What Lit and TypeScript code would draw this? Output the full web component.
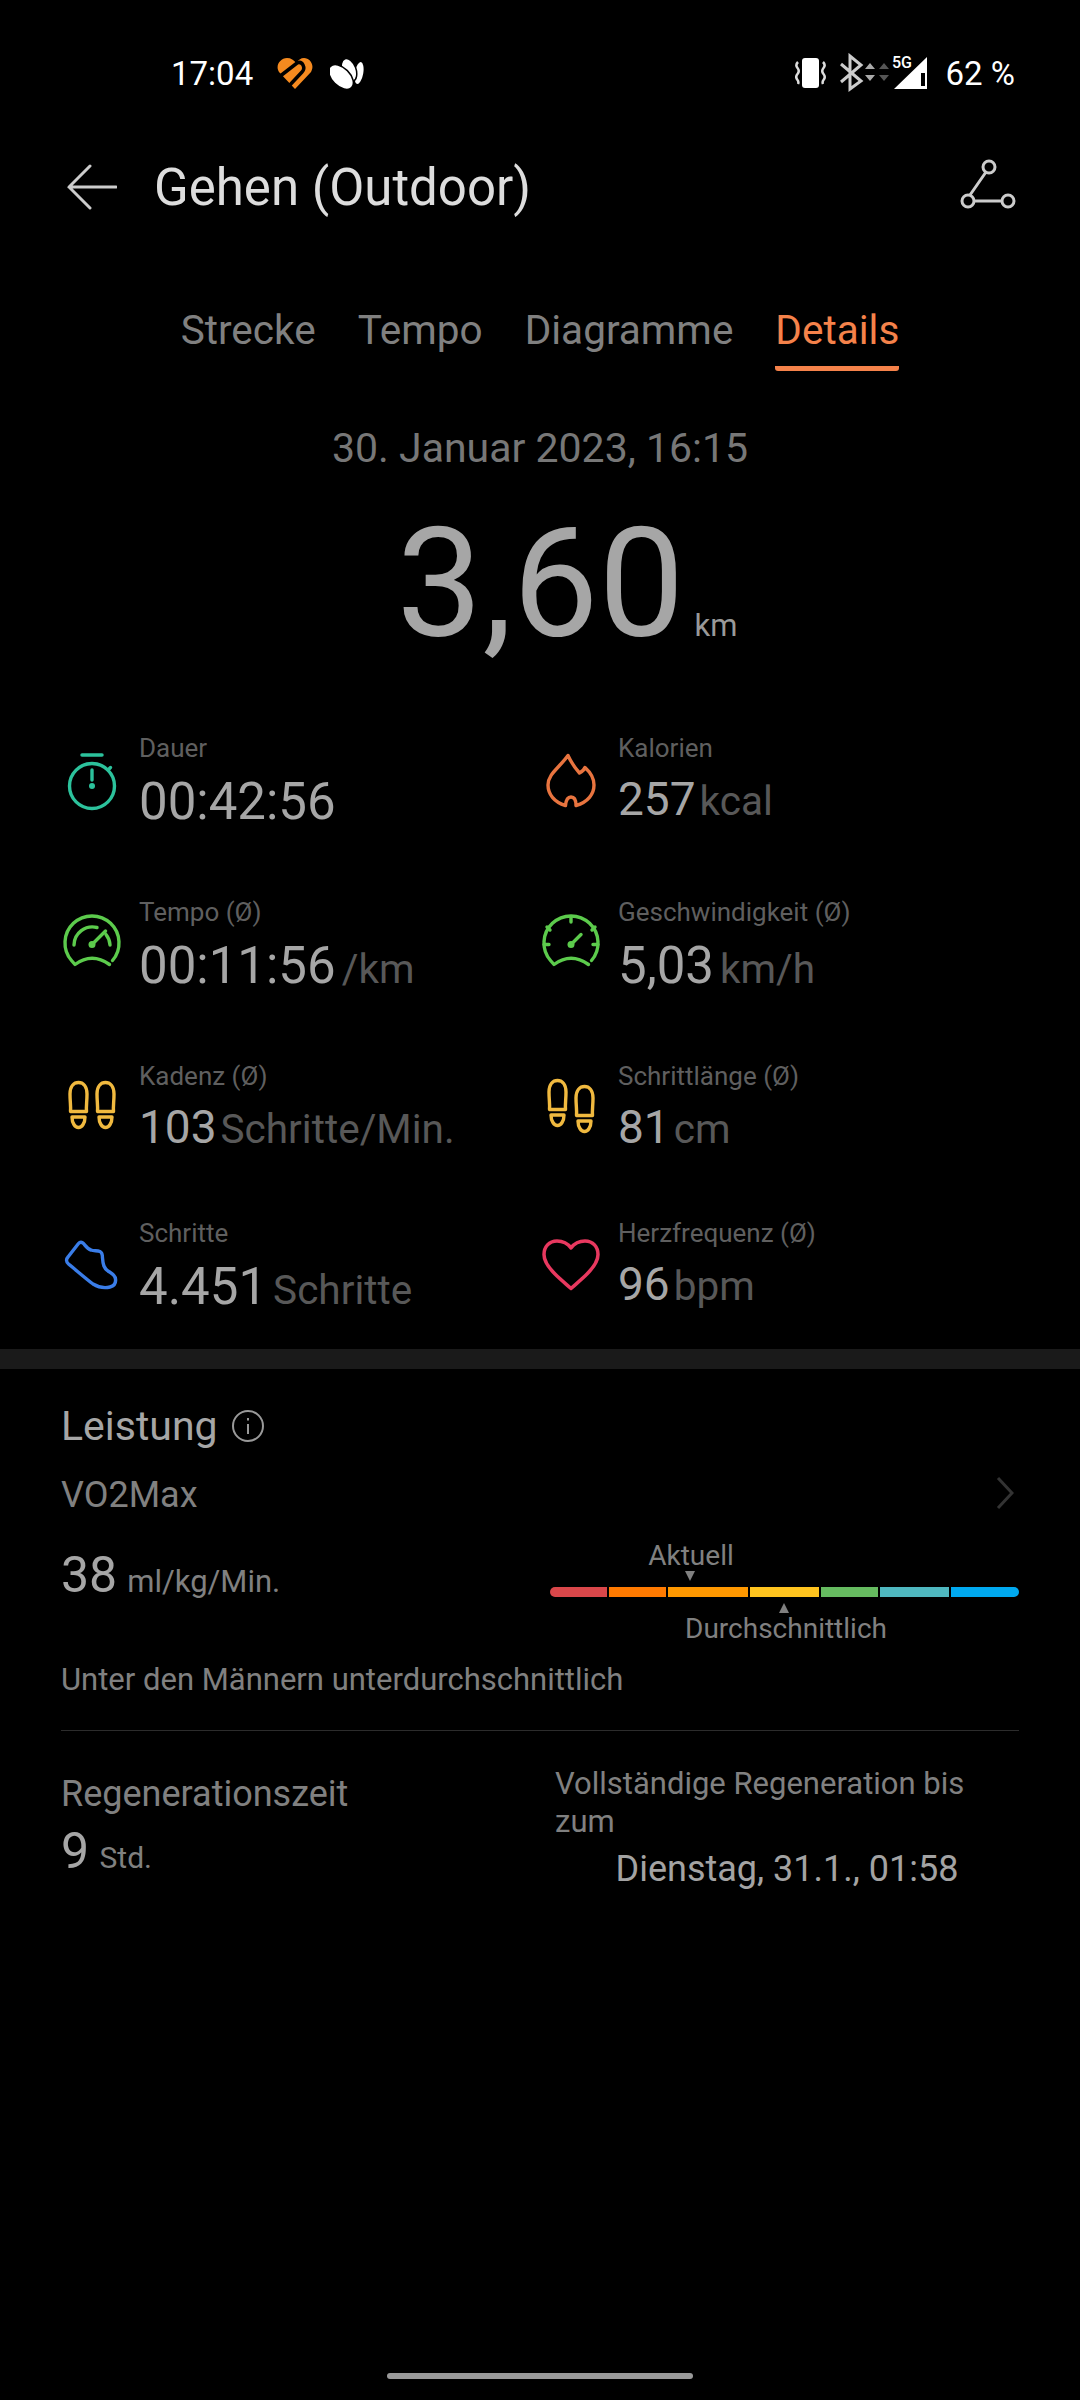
import { LitElement, css, html, svg } from "lit";
import { customElement } from "lit/decorators.js";

const gaugeOutline = svg`<path d="M53.5 56.5Q36 44 19 56.5L15.5 52.5A27 27 0 1 1 56.5 52.5"/>`;

const foot = (x: number, y: number) => svg`<g transform="translate(${x} ${y})">
  <path d="M14.5 42.5H30.5C30 37 31 33 31 25C31 17 27 13.5 22.5 13.5C18 13.5 14 17 14 25C14 33 15 37 14.5 42.5Z"/>
  <path d="M16 48H29C29 54 26 58.5 22.5 58.5C19 58.5 16 54 16 48Z"/>
</g>`;

const icons = {
  watch: svg`<g stroke="#2cc29c">
    <circle cx="36" cy="42" r="22.5"/><path d="M26 11H46" stroke-width="3.5"/><path d="M36 26V36"/><path d="M52 26L54.5 23.5"/>
    <circle cx="36" cy="42" r="3" fill="#2cc29c" stroke="none"/></g>`,
  pace: svg`<g stroke="#5ccb4c">${gaugeOutline}
    <path d="M18 37A18.5 18.5 0 0 1 41 19.5"/><path d="M50 26.5A18.5 18.5 0 0 1 54 37"/>
    <path d="M36 36.5L49.5 23"/><circle cx="36" cy="36.5" r="3.5" fill="#5ccb4c" stroke="none"/></g>`,
  speed: svg`<g stroke="#5ccb4c">${gaugeOutline}
    <path d="M36 9.5V14M12 19L15 22M60 19L57 22M9 36.5H14M63 36.5H58"/>
    <path d="M36 36.5L46 26.5"/><circle cx="36" cy="36.5" r="3.5" fill="#5ccb4c" stroke="none"/></g>`,
  flame: svg`<path stroke="#e8743f" d="M33 11.5C36 18 40 24 44.5 29C46.5 28 49 26 50 23.5C55 28 59 34 59 41C59 50 53 58 41 61.5C41 56 39 53 36 53C33 53 31 56 30.5 61.5C19 58 13 50 13 41C13 30 24 24 33 11.5Z"/>`,
  feet: svg`<g stroke="#f0b93f">${foot(0, -3)}${foot(27, -3)}</g>`,
  feetOffset: svg`<g stroke="#f0b93f">${foot(0, -5)}${foot(27, 1)}</g>`,
  shoe: svg`<path stroke="#3a7de8" d="M22.5 14.5C24 12.8 26 13 27.5 14.5C30 17.5 31.5 20 35 21C38 22 41 21.5 44 22.5C46 23.5 46.5 26 46.5 29C47 36 48 39 52 42C55 44 59 45.5 59.5 50C60 54 58.5 57 54 58C48 59.5 42 58 37 55C29 49 20 41 12.5 35C10 33 10 30 12 28Z"/>`,
  heart: svg`<path stroke="#e8385f" stroke-width="3.5" d="M36 19C32 13.5 27 12 22 12C14 12 9 18 9 25.5C9 33 14 39 20 45C25 50 31 55 36 59.5C41 55 47 50 52 45C58 39 63 33 63 25.5C63 18 58 12 50 12C45 12 40 13.5 36 19Z"/>`,
};

const metrics = [
  { icon: icons.watch, label: "Dauer", value: "00:42:56", unit: "", big: true },
  { icon: icons.flame, label: "Kalorien", value: "257", unit: "kcal", big: false },
  { icon: icons.pace, label: "Tempo (Ø)", value: "00:11:56", unit: "/km", big: true },
  { icon: icons.speed, label: "Geschwindigkeit (Ø)", value: "5,03", unit: "km/h", big: true },
  { icon: icons.feet, label: "Kadenz (Ø)", value: "103", unit: "Schritte/Min.", big: false },
  { icon: icons.feetOffset, label: "Schrittlänge (Ø)", value: "81", unit: "cm", big: false },
  { icon: icons.shoe, label: "Schritte", value: "4.451", unit: "Schritte", big: true },
  { icon: icons.heart, label: "Herzfrequenz (Ø)", value: "96", unit: "bpm", big: false },
];

const segments = [
  { width: 57, color: "#d9474a" },
  { width: 57, color: "#ff7a00" },
  { width: 80, color: "#ff9800" },
  { width: 69, color: "#ffc41f" },
  { width: 57, color: "#66bb60" },
  { width: 69, color: "#4fb8c0" },
  { width: 68, color: "#00a9f0" },
];

@customElement("app-root")
export class AppRoot extends LitElement {
  static styles = css`
    :host {
      display: block;
      width: 1080px;
    }

    .page {
      width: 1080px;
      height: 2400px;
      background: #000;
      font-family: Roboto, sans-serif;
      display: flex;
      flex-direction: column;
      overflow: hidden;
    }

    .status {
      height: 60px;
      margin-top: 43px;
      padding: 0 65px 0 171px;
      display: flex;
      align-items: center;
      color: #fff;
      font-size: 33px;
    }

    .status .time {
      width: 106px;
    }

    .status .brand {
      margin-right: 17px;
    }

    .status .cluster {
      margin-left: auto;
      margin-right: 16px;
    }

    .header {
      height: 82px;
      margin-top: 43px;
      padding: 0 64px 0 67px;
      display: flex;
      align-items: center;
      color: #ddd;
    }

    .header .title {
      margin-left: 37px;
      font-size: 51px;
      flex: 1;
    }

    .header .route {
      margin-bottom: 6px;
    }

    .tabs {
      margin-top: 75px;
      height: 68px;
      display: flex;
      justify-content: center;
      gap: 42px;
      font-size: 40.5px;
      color: #808080;
    }

    .tab {
      line-height: 54px;
      box-sizing: border-box;
      height: 68px;
    }

    .tab.active {
      color: #f5824a;
      border-bottom: 5px solid #f5824a;
      border-radius: 0 0 3px 3px;
    }

    .date {
      margin-top: 54px;
      text-align: center;
      font-size: 41px;
      line-height: 46px;
      color: #777;
    }

    .distance {
      margin-top: 28px;
      height: 170px;
      display: flex;
      justify-content: center;
      align-items: baseline;
      padding-left: 54px;
      color: #a6a6a6;
      font-size: 153px;
      line-height: 170px;
    }

    .distance span {
      font-size: 31px;
      line-height: 1;
      margin-left: 10px;
      color: #999;
    }

    .metrics {
      margin-top: 61px;
      padding-left: 44px;
      display: grid;
      grid-template-columns: 479px 478px;
      grid-template-rows: 164px 164px 157px 134px;
    }

    .metric {
      display: flex;
      align-items: flex-start;
    }

    .icon {
      width: 72px;
      height: 72px;
      margin: 14px 11px 0 12px;
      flex: none;
      fill: none;
      stroke-width: 3.4;
      stroke-linecap: round;
      stroke-linejoin: round;
    }

    .label {
      font-size: 26px;
      line-height: 36px;
      color: #5f5f5f;
    }

    .value {
      display: flex;
      align-items: baseline;
      gap: 4px;
      height: 58px;
      margin-top: 4px;
      color: #a6a6a6;
      font-size: 46px;
      line-height: 58px;
      white-space: nowrap;
    }

    .value.big {
      font-size: 51px;
      gap: 6px;
      margin-top: 7px;
    }

    .unit {
      font-size: 40.5px;
      color: #585858;
    }

    .rule {
      flex: none;
      height: 20px;
      background: #1a1a1a;
    }

    .performance {
      padding: 0 61px 0 61px;
      display: flex;
      flex-direction: column;
    }

    .heading {
      margin-top: 34px;
      height: 46px;
      display: flex;
      align-items: center;
      gap: 14px;
      font-size: 41px;
      color: #a6a6a6;
    }

    .vo2 {
      margin-top: 24px;
      height: 44px;
      display: flex;
      justify-content: space-between;
      align-items: center;
      font-size: 36px;
      color: #808080;
    }

    .vo2 svg {
      margin: 0 5px 4px 0;
    }

    .reading {
      height: 100px;
      margin-top: 8px;
      display: flex;
      justify-content: space-between;
      align-items: flex-start;
      font-size: 31px;
      color: #808080;
    }

    .reading .amount {
      margin-top: 20px;
      line-height: 60px;
    }

    .reading b {
      font-weight: 400;
      font-size: 50px;
      color: #a6a6a6;
      margin-right: 10px;
    }

    .gauge {
      position: relative;
      width: 469px;
      height: 100px;
      margin-top: 15px;
    }

    .bar {
      position: absolute;
      top: 47px;
      left: 0;
      right: 0;
      height: 10px;
      display: flex;
      justify-content: space-between;
      border-radius: 5px;
      overflow: hidden;
    }

    .mark {
      position: absolute;
      transform: translateX(-50%);
      font-size: 28px;
      line-height: 32px;
      color: #808080;
      white-space: nowrap;
    }

    .mark.current {
      top: 0;
      left: 141px;
    }

    .mark.average {
      top: 73px;
      left: 236px;
    }

    .arrow {
      position: absolute;
      width: 0;
      height: 0;
      border-left: 5px solid transparent;
      border-right: 5px solid transparent;
    }

    .arrow.down {
      top: 31px;
      left: 135px;
      border-top: 10px solid #808080;
    }

    .arrow.up {
      top: 63px;
      left: 229px;
      border-bottom: 10px solid #808080;
    }

    .summary {
      margin-top: 35px;
      font-size: 31px;
      line-height: 40px;
      color: #808080;
    }

    .divider {
      margin-top: 30px;
      height: 1px;
      background: #2c2c2c;
    }

    .recovery {
      margin-top: 31px;
      display: flex;
      justify-content: space-between;
    }

    .recovery .name {
      margin-top: 10px;
      font-size: 36px;
      line-height: 44px;
      color: #808080;
    }

    .recovery .hours {
      margin-top: 3px;
      font-size: 30px;
      color: #808080;
      line-height: 64px;
    }

    .recovery .hours b {
      font-weight: 400;
      font-size: 50px;
      color: #a6a6a6;
      margin-right: 3px;
    }

    .until {
      width: 464px;
      padding-top: 3px;
      font-size: 31px;
      line-height: 38px;
      color: #808080;
    }

    .until div {
      margin-top: 6px;
      text-align: center;
      font-size: 36px;
      line-height: 44px;
      color: #a3a3a3;
    }

    .nav {
      margin: auto auto 21px;
      width: 306px;
      height: 6px;
      border-radius: 3px;
      background: #999;
    }
  `;

  render() {
    return html`
      <div class="page">
        <div class="status">
          <span class="time">17:04</span>
          <svg class="brand" width="36" height="31" viewBox="0 0 36 31">
            <path fill="#f58a1f" d="M18 31L2 14C-2 8 3 0 10 0C14 0 17 2 19 5C21 2 24 0 27 0C33 0 38 7 34 14Z"/>
            <path fill="none" stroke="#000" stroke-width="3.5" d="M2 19L20 5Q24 3 26 7Q28 11 25 14L11 29"/>
          </svg>
          <svg width="35" height="31" viewBox="0 0 35 31" fill="#fff" stroke="#000" stroke-width="1.5">
            <ellipse cx="29" cy="15" rx="5" ry="12" transform="rotate(10 29 15)"/>
            <ellipse cx="19" cy="12" rx="7" ry="12" transform="rotate(-20 19 12)"/>
            <ellipse cx="11" cy="19" rx="15" ry="9" transform="rotate(45 11 19)"/>
          </svg>
          <svg class="cluster" width="135" height="40" viewBox="0 0 135 40" fill="none">
            <rect x="7" y="5" width="17" height="30" rx="3" fill="#fff"/>
            <path stroke="#ddd" stroke-width="2.5" d="M3 9Q0 12 2.5 15Q5 18 2.5 21Q0 24 2.5 27Q4 29 3 31M28 9Q31 12 28.5 15Q26 18 28.5 21Q31 24 28.5 27Q27 29 28 31"/>
            <path stroke="#ccc" stroke-width="3" d="M46 11L66 28L55 36V3L66 12L46 29"/>
            <path fill="#aaa" d="M70 16L75 10L80 16ZM70 22H80L75 28Z"/>
            <path fill="#555" d="M84 16L89 10L94 16ZM84 22H94L89 28Z"/>
            <text x="97" y="15" fill="#fff" font-family="Roboto" font-weight="500" font-size="16">5G</text>
            <path fill="#fff" fill-rule="evenodd" d="M99 36L132 4V36ZM126 20V33H130V20Z"/>
          </svg>
          <span>62 %</span>
        </div>

        <div class="header">
          <svg width="50" height="46" viewBox="0 0 50 46" fill="none" stroke="#ccc" stroke-width="3" stroke-linecap="round">
            <path d="M23 2L2 23L23 44M2 23H49"/>
          </svg>
          <span class="title">Gehen (Outdoor)</span>
          <svg class="route" width="56" height="50" viewBox="0 0 56 50" fill="none" stroke="#ccc" stroke-width="3">
            <circle cx="29" cy="8" r="6"/><circle cx="8" cy="42" r="6"/><circle cx="48" cy="42" r="6"/>
            <path d="M26 13L10 36M14 42H42"/>
          </svg>
        </div>

        <div class="tabs">
          <span class="tab">Strecke</span>
          <span class="tab">Tempo</span>
          <span class="tab">Diagramme</span>
          <span class="tab active">Details</span>
        </div>

        <div class="date">30. Januar 2023, 16:15</div>
        <div class="distance">3,60<span>km</span></div>

        <div class="metrics">
          ${metrics.map(
            (m) => html`
              <div class="metric">
                <svg class="icon" viewBox="0 0 72 72">${m.icon}</svg>
                <div>
                  <div class="label">${m.label}</div>
                  <div class="value ${m.big ? "big" : ""}">
                    ${m.value}${m.unit ? html`<span class="unit">${m.unit}</span>` : ""}
                  </div>
                </div>
              </div>
            `,
          )}
        </div>

        <div class="rule"></div>

        <div class="performance">
          <div class="heading">
            Leistung
            <svg width="32" height="32" viewBox="0 0 32 32" fill="none" stroke="#999" stroke-width="2">
              <circle cx="16" cy="16" r="15"/>
              <path d="M16 14V24"/><path d="M16 8V10.5"/>
            </svg>
          </div>
          <div class="vo2">
            VO2Max
            <svg width="18" height="34" viewBox="0 0 18 34" fill="none" stroke="#333" stroke-width="3">
              <path d="M2 2L16 17L2 32"/>
            </svg>
          </div>
          <div class="reading">
            <span class="amount"><b>38</b>ml/kg/Min.</span>
            <div class="gauge">
              <span class="mark current">Aktuell</span>
              <span class="arrow down"></span>
              <div class="bar">
                ${segments.map(
                  (s) => html`<span style="width:${s.width}px;background:${s.color}"></span>`,
                )}
              </div>
              <span class="arrow up"></span>
              <span class="mark average">Durchschnittlich</span>
            </div>
          </div>
          <div class="summary">Unter den Männern unterdurchschnittlich</div>
          <div class="divider"></div>
          <div class="recovery">
            <div>
              <div class="name">Regenerationszeit</div>
              <div class="hours"><b>9</b> Std.</div>
            </div>
            <div class="until">
              Vollständige Regeneration bis zum
              <div>Dienstag, 31.1., 01:58</div>
            </div>
          </div>
        </div>

        <div class="nav"></div>
      </div>
    `;
  }
}
